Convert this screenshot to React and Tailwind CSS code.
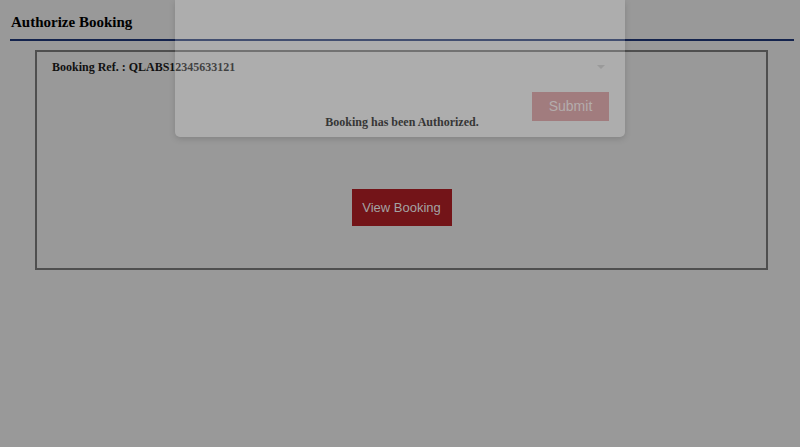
import React from 'react';

const App = () => {
  return (
    <div className="relative min-h-[447px] bg-[#999999] font-['Liberation_Serif',serif]">
      {/* Page header */}
      <div className="pl-[10px] pr-[6px] pt-[14px]">
        <h1 className="pl-px text-[15px] font-bold leading-[17px] text-black">Authorize Booking</h1>
        <div className="mt-[8px] h-[2px] bg-[#14234d]" />
      </div>

      {/* Booking panel */}
      <div className="ml-[35px] mr-[32px] mt-[9px] h-[220px] border-2 border-[#4f4f4f] pl-[15px] pt-[8px]">
        <p className="text-[12px] font-bold leading-[14px] text-[#111]">Booking Ref. : QLABS12345633121</p>
        <div className="mt-[115px] flex justify-center pr-[15px]">
          <button className="h-[37px] w-[100px] bg-[#731418] font-['Liberation_Sans',sans-serif] text-[13px] text-[#a3a3a3]">
            View Booking
          </button>
        </div>
      </div>

      {/* Fading modal */}
      <div className="absolute left-[175px] top-0 h-[137px] w-[450px] rounded-b-[5px] bg-white/20 px-[16px] shadow-[0_2px_6px_rgba(0,0,0,0.15)]">
        <div className="mt-[50px] flex h-[34px] items-center justify-end pr-[4px]">
          <div className="h-0 w-0 border-x-[4px] border-t-[4px] border-x-transparent border-t-[#9a9a9a]" />
        </div>
        <div className="mt-[8px] flex justify-end">
          <button className="h-[29px] w-[77px] bg-[#a17c7e] font-['Liberation_Sans',sans-serif] text-[14px] text-[#b4acac]">
            Submit
          </button>
        </div>
        <p className="-mt-[6px] pl-[4px] text-center text-[12px] font-bold leading-[14px] text-[#363636]">
          Booking has been Authorized.
        </p>
      </div>
    </div>
  );
};

export default App;
